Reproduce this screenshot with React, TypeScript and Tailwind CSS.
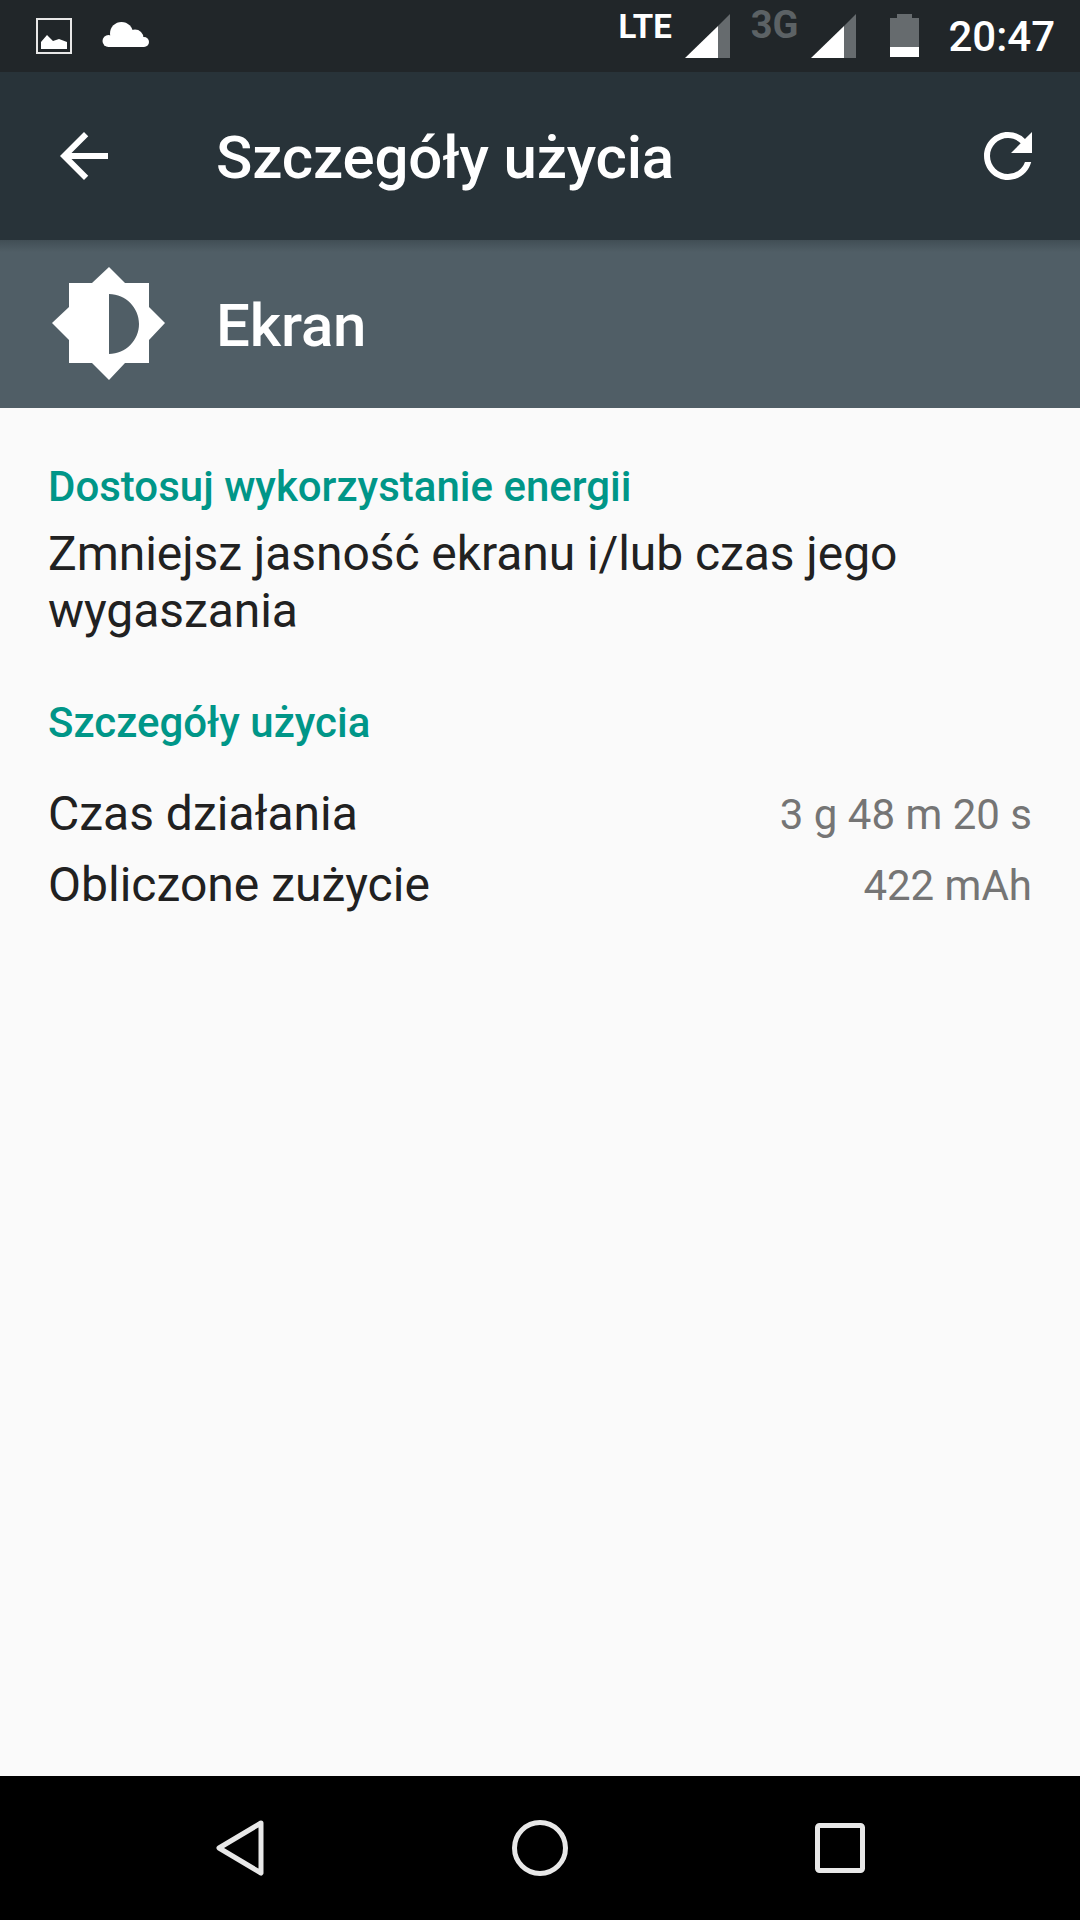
import React from 'react';

const font = { fontFamily: 'Roboto, sans-serif' };

function Signal() {
  return (
    <svg width="46" height="45" viewBox="0 0 46 45" className="block">
      <polygon points="45,0 45,44 33,44 33,12" fill="#666b6e" />
      <polygon points="33,12 33,44 0,44" fill="#ffffff" />
    </svg>
  );
}

function StatusBar() {
  return (
    <div className="h-[72px] bg-[#212629] flex items-start pl-[36px] pr-[25px] shrink-0">
      <svg width="36" height="36" viewBox="0 0 36 36" className="mt-[18px]">
        <rect x="1" y="1" width="34" height="34" fill="none" stroke="#e8e8e8" strokeWidth="2" />
        <path d="M5 31V24L11 17L17 23L23 21L31 24V31Z" fill="#fff" />
      </svg>
      <svg width="48" height="27" viewBox="0 0 48 27" className="ml-[30px] mt-[21px]" fill="#fff">
        <circle cx="19.5" cy="12.5" r="11.5" />
        <circle cx="33" cy="17" r="8.5" />
        <circle cx="6.5" cy="20" r="6" />
        <circle cx="42" cy="21" r="5" />
        <rect x="6" y="16" width="36" height="10" />
      </svg>
      <div className="flex-1" />
      <span className="text-white text-[33px] font-bold leading-none mt-[10px] mr-[13px]" style={font}>LTE</span>
      <div className="mt-[14px]"><Signal /></div>
      <span className="text-[#5c6265] text-[38px] font-bold leading-none ml-[20px] mt-[6px]" style={font}>3G</span>
      <div className="ml-[13px] mt-[14px]"><Signal /></div>
      <div className="ml-[33px] mt-[14px] w-[29px] h-[43px] flex flex-col items-center">
        <div className="w-[15px] h-[4px] bg-[#666b6e]" />
        <div className="w-full flex-1 bg-[#666b6e]" />
        <div className="w-full h-[10px] bg-white" />
      </div>
      <span className="text-white text-[42px] font-medium leading-none ml-[29px] mt-[16px]" style={font}>20:47</span>
    </div>
  );
}

function Toolbar() {
  return (
    <div className="h-[168px] bg-[#283339] flex items-center shrink-0">
      <div className="w-[216px] pl-[48px]">
        <svg width="72" height="72" viewBox="0 0 24 24" className="block">
          <path fill="#fff" d="M20 11H7.83l5.59-5.59L12 4l-8 8 8 8 1.41-1.41L7.83 13H20v-2z" />
        </svg>
      </div>
      <h1 className="text-white text-[60px] font-medium flex-1 mt-[3px] tracking-[-0.15px]" style={font}>Szczegóły użycia</h1>
      <svg width="72" height="72" viewBox="0 0 24 24" className="mr-[36px]">
        <path fill="#fff" d="M17.65 6.35A7.958 7.958 0 0 0 12 4c-4.42 0-7.99 3.58-7.99 8s3.57 8 7.99 8c3.73 0 6.84-2.55 7.73-6h-2.08A5.99 5.99 0 0 1 12 18c-3.31 0-6-2.69-6-6s2.69-6 6-6c1.66 0 3.14.69 4.22 1.78L13 11h7V4l-2.35 2.35z" />
      </svg>
    </div>
  );
}

function AppHeader() {
  return (
    <div className="h-[168px] bg-[#505e66] flex items-center relative shrink-0">
      <div className="absolute left-0 right-0 top-0 h-[12px] bg-gradient-to-b from-[#414e55] to-[#505e66]" />
      <div className="w-[216px] pl-[52px]">
        <svg width="114" height="114" viewBox="0 0 114 114" className="block">
          <path fill="#fff" fillRule="evenodd" d="M57 0L73 16H97V40L113 56L97 73V96H73L57 113L40 96H17V73L0 56L17 40V16H40ZM57 27V87C74 87 87 73 87 57C87 41 74 27 57 27Z" />
        </svg>
      </div>
      <span className="text-white text-[60px] font-medium mt-[3px] tracking-[-0.15px]" style={font}>Ekran</span>
    </div>
  );
}

function Row({ label, value }: { label: string; value: string }) {
  return (
    <div className="flex justify-between items-center h-[71px]">
      <span className="text-[48px] text-[#212121]">{label}</span>
      <span className="text-[42px] text-[#757575] mt-[2px]">{value}</span>
    </div>
  );
}

export default function App() {
  return (
    <div className="w-[1080px] h-[1920px] flex flex-col bg-[#fafafa] overflow-hidden" style={font}>
      <StatusBar />
      <Toolbar />
      <AppHeader />
      <main className="flex-1 px-[48px] pt-[51px]">
        <h2 className="text-[#009688] text-[42px] font-medium leading-[56px]">Dostosuj wykorzystanie energii</h2>
        <p className="text-[48px] text-[#212121] leading-[57px] mt-[10px] tracking-[-0.07px]">Zmniejsz jasność ekranu i/lub czas jego wygaszania</p>
        <h2 className="text-[#009688] text-[42px] font-medium leading-[56px] mt-[56px]">Szczegóły użycia</h2>
        <div className="mt-[27px]">
          <Row label="Czas działania" value="3 g 48 m 20 s" />
          <Row label="Obliczone zużycie" value="422 mAh" />
        </div>
      </main>
      <div className="h-[144px] bg-black flex items-center pl-[216px] shrink-0">
        <svg width="48" height="56" viewBox="0 0 48 56">
          <path d="M45 3L3 28L45 53Z" fill="none" stroke="#e8e8e8" strokeWidth="5" strokeLinejoin="round" />
        </svg>
        <svg width="56" height="56" viewBox="0 0 56 56" className="ml-[248px]">
          <circle cx="28" cy="28" r="25.5" fill="none" stroke="#e8e8e8" strokeWidth="5" />
        </svg>
        <svg width="50" height="50" viewBox="0 0 50 50" className="ml-[247px]">
          <rect x="2.5" y="2.5" width="45" height="45" rx="2" fill="none" stroke="#e8e8e8" strokeWidth="5" />
        </svg>
      </div>
    </div>
  );
}
